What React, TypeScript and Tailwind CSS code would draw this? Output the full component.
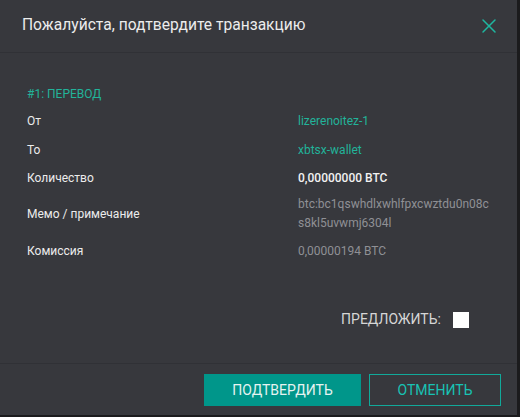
import { X } from "lucide-react";

const rows = [
  { label: "От", value: "lizerenoitez-1", tone: "teal" },
  { label: "То", value: "xbtsx-wallet", tone: "teal" },
  { label: "Количество", value: "0,00000000 BTC", tone: "strong" },
];

export default function App() {
  return (
    <div className="h-[417px] w-[520px] bg-[#1b1b1d] font-['Roboto',sans-serif]">
      <div className="flex h-[415px] w-[517px] flex-col bg-[#37383d]">
        <div className="flex h-[53px] items-center justify-between border-b border-[#303136] pl-[22px] pr-[16px]">
          <h2 className="text-[15.6px] text-[#ececec]">Пожалуйста, подтвердите транзакцию</h2>
          <X className="h-[24px] w-[24px] text-[#1fb6a0]" strokeWidth={1.5} />
        </div>

        <div className="flex flex-1 flex-col px-[27px] pt-[32px]">
          <p className="text-[12px] text-[#22b39a]">#1: ПЕРЕВОД</p>
          <div className="mt-[4px] text-[12px]">
            {rows.map((r) => (
              <div key={r.label} className="grid h-[28.5px] grid-cols-[271px_1fr] items-center">
                <span className="text-[#ececec]">{r.label}</span>
                <span
                  className={
                    r.tone === "teal" ? "text-[#22b39a]" : "font-medium text-[#f2f2f2]"
                  }
                >
                  {r.value}
                </span>
              </div>
            ))}
            <div className="grid grid-cols-[271px_1fr] items-center py-[2px]">
              <span className="text-[#ececec]">Мемо / примечание</span>
              <span className="break-all leading-[19px] text-[#8f9095]">
                btc:bc1qswhdlxwhlfpxcwztdu0n08c
                <br />
                s8kl5uvwmj6304l
              </span>
            </div>
            <div className="grid h-[32px] grid-cols-[271px_1fr] items-center">
              <span className="text-[#ececec]">Комиссия</span>
              <span className="text-[#8f9095]">0,00000194 BTC</span>
            </div>
          </div>

          <div className="mt-auto mb-[33px] flex items-center justify-end gap-[12px] pr-[21px]">
            <span className="text-[14px] text-[#d6d6d6]">ПРЕДЛОЖИТЬ:</span>
            <span className="h-[16px] w-[16px] bg-white" />
          </div>
        </div>

        <div className="flex h-[52px] items-start justify-end gap-[8px] border-t border-[#303136] pr-[16px] pt-[10px]">
          <button className="h-[32px] w-[157px] bg-[#00968a] text-[14px] text-[#e6f3f1]">
            ПОДТВЕРДИТЬ
          </button>
          <button className="h-[32px] w-[132px] border border-[#11a99a] text-[14px] text-[#18c3b4]">
            ОТМЕНИТЬ
          </button>
        </div>
      </div>
    </div>
  );
}
